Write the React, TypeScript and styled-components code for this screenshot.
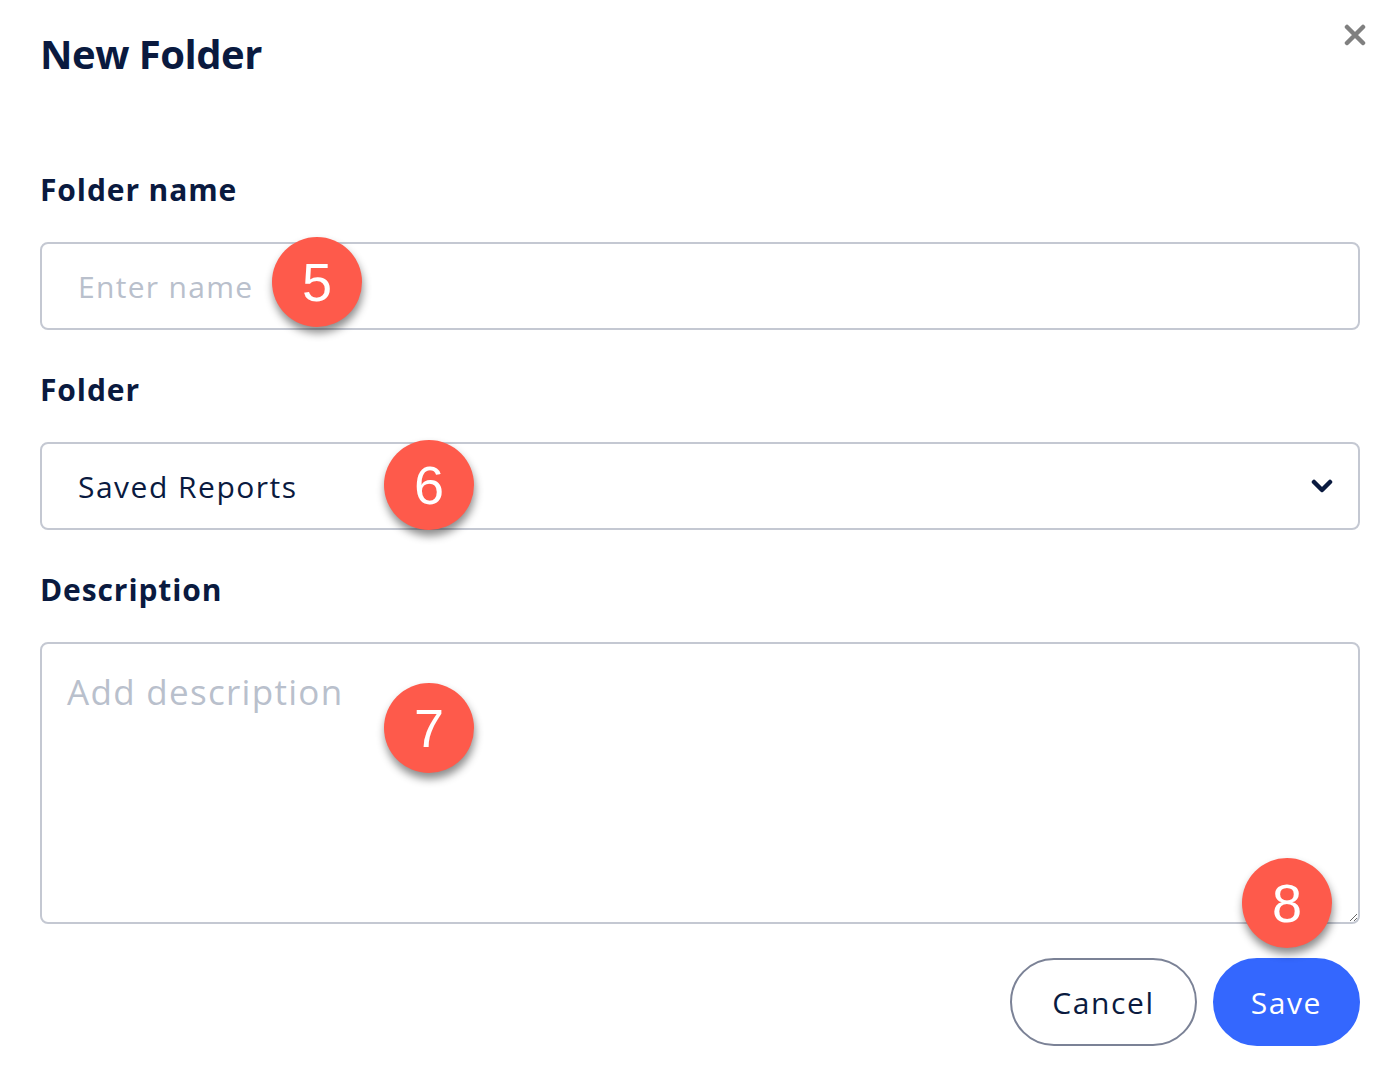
import React from 'react';
import styled, { createGlobalStyle } from 'styled-components';

const GlobalStyle = createGlobalStyle`
	html, body {
		margin: 0;
		padding: 0;
		background: #ffffff;
	}
	body {
		font-family: 'Open Sans', 'Noto Sans', sans-serif;
		color: #0a1a3f;
	}
	* {
		box-sizing: border-box;
	}
`;

const Dialog = styled.div`
	position: relative;
	width: 1396px;
	min-height: 1088px;
	padding: 30px 36px 0 40px;
`;

const Title = styled.h1`
	margin: 0;
	font-size: 40px;
	line-height: 48px;
	font-weight: 700;
	letter-spacing: -0.5px;
	color: #0a1a3f;
`;

const CloseButton = styled.button`
	position: absolute;
	top: 22px;
	right: 28px;
	width: 26px;
	height: 26px;
	padding: 0;
	border: none;
	background: transparent;
	display: flex;
	align-items: center;
	justify-content: center;
	cursor: pointer;
`;

const Form = styled.form`
	margin-top: 94px;
	display: flex;
	flex-direction: column;
	gap: 42px;
`;

const Field = styled.div`
	display: flex;
	flex-direction: column;
	gap: 34px;
`;

const Label = styled.label`
	font-size: 30px;
	line-height: 36px;
	font-weight: 700;
	letter-spacing: 0.9px;
	color: #0a1a3f;
`;

const ControlWrap = styled.div`
	position: relative;
`;

const TextInput = styled.input`
	width: 100%;
	height: 88px;
	padding: 0 36px;
	border: 2px solid #c4c8d2;
	border-radius: 8px;
	font-family: inherit;
	font-size: 30px;
	letter-spacing: 1.3px;
	color: #0a1a3f;
	outline: none;

	&::placeholder {
		color: #b9c0cc;
	}
`;

const SelectBox = styled.div`
	width: 100%;
	height: 88px;
	padding: 0 25px 0 36px;
	border: 2px solid #c4c8d2;
	border-radius: 8px;
	display: flex;
	align-items: center;
	justify-content: space-between;
	font-size: 30px;
	letter-spacing: 1.5px;
	color: #0a1a3f;
`;

const TextArea = styled.textarea`
	display: block;
	width: 100%;
	height: 282px;
	padding: 26px 25px;
	border: 2px solid #c4c8d2;
	border-radius: 8px;
	font-family: inherit;
	font-size: 35px;
	line-height: 44px;
	letter-spacing: 1.3px;
	color: #0a1a3f;
	outline: none;
	resize: vertical;

	&::placeholder {
		color: #b9c0cc;
	}
`;

const Actions = styled.div`
	margin-top: 34px;
	display: flex;
	justify-content: flex-end;
	gap: 16px;
`;

const Button = styled.button<{ $primary?: boolean }>`
	height: 88px;
	padding: 0 ${(p) => (p.$primary ? 36 : 40)}px;
	border-radius: 44px;
	font-family: inherit;
	font-size: 30px;
	font-weight: 500;
	letter-spacing: 1.6px;
	cursor: pointer;
	border: 2px solid ${(p) => (p.$primary ? '#3467fe' : '#7b8296')};
	background: ${(p) => (p.$primary ? '#3467fe' : '#ffffff')};
	color: ${(p) => (p.$primary ? '#ffffff' : '#0a1a3f')};
`;

const Badge = styled.span<{ $left: number; $top: number }>`
	position: absolute;
	left: ${(p) => p.$left}px;
	top: ${(p) => p.$top}px;
	width: 90px;
	height: 90px;
	border-radius: 50%;
	background: #fe5a4b;
	color: #ffffff;
	font-family: 'Liberation Sans', Arial, sans-serif;
	font-size: 54px;
	line-height: 90px;
	text-align: center;
	box-shadow: 1px 6px 8px rgba(0, 0, 0, 0.45);
	pointer-events: none;
`;

export default function App(): JSX.Element {
	return (
		<>
			<GlobalStyle />
			<Dialog>
				<Title>New Folder</Title>
				<CloseButton type="button" aria-label="Close">
					<svg width="22" height="22" viewBox="0 0 22 22">
						<path
							d="M3 3 L19 19 M19 3 L3 19"
							stroke="#808080"
							strokeWidth="4.5"
							strokeLinecap="round"
						/>
					</svg>
				</CloseButton>

				<Form onSubmit={(e) => e.preventDefault()}>
					<Field>
						<Label>Folder name</Label>
						<ControlWrap>
							<TextInput type="text" placeholder="Enter name" />
							<Badge $left={232} $top={-5}>5</Badge>
						</ControlWrap>
					</Field>

					<Field>
						<Label>Folder</Label>
						<ControlWrap>
							<SelectBox>
								<span>Saved Reports</span>
								<svg width="22" height="14" viewBox="0 0 22 14">
									<path
										d="M3 3 L11 11 L19 3"
										fill="none"
										stroke="#0a1a3f"
										strokeWidth="4.5"
										strokeLinecap="round"
										strokeLinejoin="round"
									/>
								</svg>
							</SelectBox>
							<Badge $left={344} $top={-2}>6</Badge>
						</ControlWrap>
					</Field>

					<Field>
						<Label>Description</Label>
						<ControlWrap>
							<TextArea placeholder="Add description" />
							<Badge $left={344} $top={41}>7</Badge>
							<Badge $left={1202} $top={216}>8</Badge>
						</ControlWrap>
					</Field>
				</Form>

				<Actions>
					<Button type="button">Cancel</Button>
					<Button type="button" $primary>
						Save
					</Button>
				</Actions>
			</Dialog>
		</>
	);
}
